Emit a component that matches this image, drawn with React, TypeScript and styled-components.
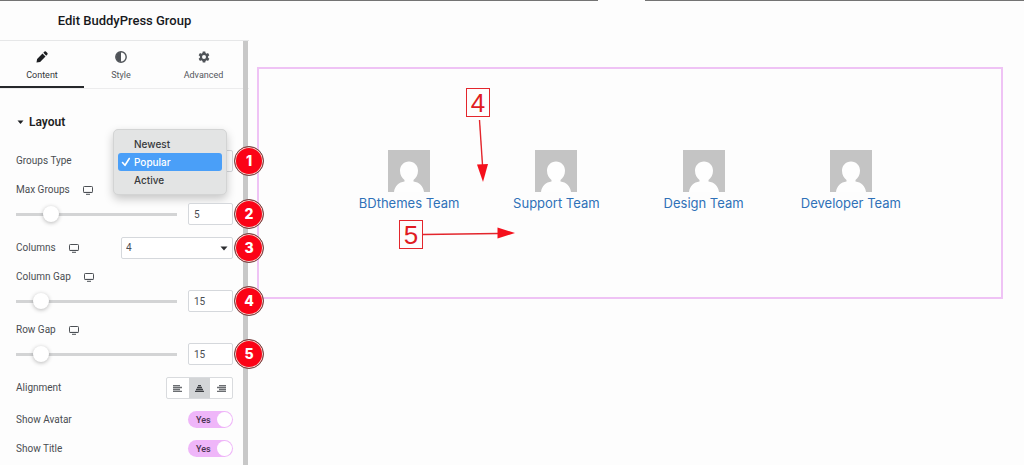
import React, { useState } from 'react';
import styled, { createGlobalStyle } from 'styled-components';

const GlobalStyle = createGlobalStyle`
  *, *::before, *::after { box-sizing: border-box; }
  body {
    margin: 0;
    background: #fdfdfd;
    font-family: Roboto, "Liberation Sans", sans-serif;
    font-size: 10px;
    line-height: 12px;
    color: #4a4d52;
  }
  button, input, select { font: inherit; color: inherit; margin: 0; }
`;

const Page = styled.div`
  min-height: 100vh;
  display: flex;
  flex-direction: column;
`;

const TopLine = styled.div`
  display: grid;
  grid-template-columns: 598fr 47fr 379fr;
  height: 1px;
`;

const LineSegment = styled.span<{ $visible?: boolean }>`
  background: ${p => (p.$visible ? '#747474' : 'transparent')};
`;

const Workspace = styled.div`
  flex: 1;
  display: flex;
`;

const Sidebar = styled.aside`
  position: relative;
  z-index: 1;
  flex: none;
  width: 249px;
`;

const SidebarHeader = styled.header`
  height: 40px;
  display: flex;
  align-items: center;
  justify-content: center;
  border-bottom: 1px solid #e6e7e8;
`;

const Title = styled.h1`
  margin: 0;
  font-size: 13px;
  line-height: 16px;
  font-weight: 500;
  color: #17191c;
`;

const ScrollBar = styled.div`
  position: absolute;
  top: 40px;
  right: 1px;
  bottom: 0;
  width: 5px;
  background: #c8c8c8;
`;

const Tabs = styled.div`
  display: grid;
  grid-template-columns: 84px 74px 1fr;
  height: 48px;
  border-bottom: 1px solid #ececed;
`;

const Tab = styled.button<{ $active?: boolean }>`
  display: flex;
  flex-direction: column;
  align-items: center;
  gap: 6px;
  padding: 10px 0 0;
  border: 0;
  border-bottom: 2px solid ${p => (p.$active ? '#26282b' : 'transparent')};
  background: none;
  font-size: 9px;
  color: ${p => (p.$active ? '#33363a' : '#54575c')};
  svg { color: ${p => (p.$active ? '#1d1f22' : '#4f5358')}; }
`;

const Section = styled.section`
  padding: 25px 16px 0;
`;

const SectionToggle = styled.button`
  display: flex;
  align-items: center;
  gap: 4px;
  padding: 0;
  border: 0;
  background: none;
  font-size: 12px;
  line-height: 16px;
  font-weight: 600;
  color: #1d1f22;
`;

const Controls = styled.div`
  display: flex;
  flex-direction: column;
  gap: 12px;
  padding-top: 20px;
`;

const Row = styled.div`
  position: relative;
  display: flex;
  align-items: center;
  justify-content: space-between;
`;

const Labeled = styled.div`
  display: flex;
  align-items: center;
  gap: 13px;
`;

const SliderGroup = styled.div`
  display: flex;
  flex-direction: column;
  gap: 7px;
`;

const SliderRow = styled(Row)`
  gap: 11px;
`;

const Range = styled.input`
  appearance: none;
  flex: 1;
  min-width: 0;
  height: 16px;
  background: linear-gradient(#d3d4d5, #d3d4d5) center / 100% 3px no-repeat;
  &::-webkit-slider-thumb {
    appearance: none;
    width: 16px;
    height: 16px;
    border-radius: 50%;
    background: #fff;
    box-shadow: 0 1px 4px rgba(0, 0, 0, 0.28);
  }
`;

const NumberBox = styled.input`
  width: 45px;
  height: 22px;
  padding: 0 5px;
  border: 1px solid #d5d8dc;
  border-radius: 2px;
  background: #fff;
`;

const SelectWrap = styled.div`
  position: relative;
  width: 112px;
  height: 22px;
`;

const Select = styled.select`
  appearance: none;
  width: 100%;
  height: 22px;
  padding: 0 4px;
  border: 1px solid #d5d8dc;
  border-radius: 2px;
  background: #fff;
`;

const SelectCaret = styled.svg`
  position: absolute;
  right: 5px;
  top: 9px;
  pointer-events: none;
`;

const Popup = styled.ul`
  position: absolute;
  top: -21px;
  left: -8px;
  width: 114px;
  margin: 0;
  padding: 5px 4px;
  list-style: none;
  border: 1px solid #d3d4d4;
  border-radius: 5px;
  background: #e3e4e4;
  box-shadow: 0 4px 10px rgba(0, 0, 0, 0.22);
`;

const Option = styled.li<{ $selected: boolean }>`
  display: flex;
  align-items: center;
  height: 18px;
  padding-left: 3px;
  border-radius: 3px;
  font-family: Inter, "Liberation Sans", sans-serif;
  font-size: 10px;
  font-weight: 500;
  color: ${p => (p.$selected ? '#fff' : '#37393b')};
  background: ${p => (p.$selected ? '#4a9ff8' : 'transparent')};
`;

const CheckSlot = styled.span`
  display: flex;
  width: 13px;
`;

const Badge = styled.span`
  position: absolute;
  right: -31px;
  top: 50%;
  width: 30px;
  height: 30px;
  margin-top: -15px;
  display: flex;
  align-items: center;
  justify-content: center;
  border: 1px solid #6d4a48;
  border-radius: 50%;
  background: #fb0316;
  box-shadow: inset 0 0 0 1px #f3d6cf;
  color: #fff;
  font-family: Inter, "Liberation Sans", sans-serif;
  font-size: 14px;
  font-weight: 800;
`;

const AlignGroup = styled.div`
  display: grid;
  grid-template-columns: repeat(3, 1fr);
  width: 67px;
  height: 22px;
  border: 1px solid #d9dbde;
  border-radius: 2px;
  background: #fff;
`;

const AlignButton = styled.button<{ $active: boolean }>`
  display: flex;
  align-items: center;
  justify-content: center;
  padding: 0;
  border: 0;
  background: ${p => (p.$active ? '#d3d5d7' : 'transparent')};
  color: ${p => (p.$active ? '#3c3f43' : '#6b6e72')};
`;

const Toggle = styled.label`
  position: relative;
  display: flex;
  align-items: center;
  width: 45px;
  height: 17px;
  padding-left: 8px;
  border-radius: 9px;
  background: #efb6f9;
  color: #4a3350;
  font-size: 9px;
  font-weight: 500;
  &::after {
    content: '';
    position: absolute;
    right: 1px;
    top: 1px;
    width: 15px;
    height: 15px;
    border-radius: 50%;
    background: #fff;
  }
`;

const HiddenCheck = styled.input`
  position: absolute;
  inset: 0;
  opacity: 0;
`;

const Canvas = styled.main`
  flex: 1;
  min-width: 0;
  padding: 66px 21px 0 8px;
`;

const Widget = styled.div`
  position: relative;
  display: flex;
  align-items: center;
  height: 232px;
  padding: 0 84px;
  border: 2px solid #efc3f5;
`;

const GroupGrid = styled.div`
  flex: 1;
  display: grid;
  grid-template-columns: repeat(4, 1fr);
  gap: 15px;
`;

const Group = styled.a`
  display: flex;
  flex-direction: column;
  align-items: center;
  gap: 2px;
  padding-bottom: 4px;
  color: #2f71b8;
  font-family: Inter, "Liberation Sans", sans-serif;
  font-size: 13px;
  line-height: 18px;
  text-decoration: none;
  white-space: nowrap;
`;

const Mark = styled.div<{ $x: number; $y: number }>`
  position: absolute;
  left: ${p => p.$x}px;
  top: ${p => p.$y}px;
  width: 24px;
  height: 29px;
  display: flex;
  align-items: center;
  justify-content: center;
  border: 1px solid #e3262c;
  color: #e01b22;
  font-family: "Liberation Sans", sans-serif;
  font-size: 26px;
  line-height: 26px;
`;

const Arrow = styled.svg<{ $x: number; $y: number }>`
  position: absolute;
  left: ${p => p.$x}px;
  top: ${p => p.$y}px;
`;

const PencilIcon = () => (
  <svg width="12" height="12" viewBox="0 0 12 12" fill="currentColor" aria-hidden="true">
    <path d="M.5 11.5 1.1 7.900 6.500 2.500 9.500 5.500 4.100 10.900zM7.300 1.800 8.500.6q.7-.6 1.400 0L11.400 2.100q.6.700 0 1.400L10.200 4.700z" />
  </svg>
);

const ContrastIcon = () => (
  <svg width="12" height="12" viewBox="0 0 12 12" aria-hidden="true">
    <circle cx="6" cy="6" r="5.2" fill="none" stroke="currentColor" strokeWidth="1.4" />
    <path d="M6 1a5 5 0 0 0 0 10z" fill="currentColor" />
  </svg>
);

const GearIcon = () => (
  <svg width="12" height="12" viewBox="0 0 24 24" fill="currentColor" aria-hidden="true">
    <path
      fillRule="evenodd"
      d="M9.5 1h5l.6 3.2 2 1.1 3-1.1 2.6 4.4-2.5 2.1v2.6l2.5 2.1-2.6 4.4-3-1.1-2 1.1-.6 3.2h-5l-.6-3.2-2-1.1-3 1.1-2.6-4.4 2.5-2.1v-2.6L1.300 8.600l2.600-4.400 3 1.100 2-1.100zM12 8a4 4 0 1 0 0 8 4 4 0 0 0 0-8z"
    />
  </svg>
);

const MonitorIcon = () => (
  <svg width="10" height="9" viewBox="0 0 10 9" fill="none" stroke="#4c5055" aria-hidden="true">
    <rect x="0.5" y="0.5" width="9" height="6" rx="0.8" />
    <path d="M.8 6.400h8.400M3 8.300h4" />
  </svg>
);

const alignments = {
  left: 'M0 .5h7M0 2.500h9M0 4.500h7M0 6.500h9',
  center: 'M3 .5h3M2 2.500h5M1 4.500h7M0 6.500h9',
  right: 'M2 .5h7M0 2.500h9M2 4.500h7M0 6.500h9',
};
type Align = keyof typeof alignments;

const Avatar = () => (
  <svg width="42" height="42" viewBox="0 0 42 42" role="img" aria-label="Group avatar">
    <rect width="42" height="42" fill="#c4c4c4" />
    <path
      fill="#fefefe"
      d="M21 11.500c5.200 0 9 4 9 9.300 0 4-2 7.500-4.500 9.200v1.500c5.600.6 9.800 4.500 10.500 10.500H6c.7-6 4.900-9.900 10.500-10.500V30C14 28.300 12 24.800 12 20.800c0-5.300 3.800-9.300 9-9.300z"
    />
  </svg>
);

interface SliderControlProps {
  id: string;
  label: string;
  initial: number;
  max: number;
  badge: number;
}

function SliderControl({ id, label, initial, max, badge }: SliderControlProps) {
  const [value, setValue] = useState(initial);
  return (
    <SliderGroup>
      <Labeled>
        <label htmlFor={id}>{label}</label>
        <MonitorIcon />
      </Labeled>
      <SliderRow>
        <Range
          type="range"
          aria-label={label}
          min={0}
          max={max}
          value={value}
          onChange={e => setValue(Number(e.target.value))}
        />
        <NumberBox id={id} value={value} onChange={e => setValue(Number(e.target.value) || 0)} />
        <Badge>{badge}</Badge>
      </SliderRow>
    </SliderGroup>
  );
}

function ToggleControl({ label }: { label: string }) {
  return (
    <Row>
      <span>{label}</span>
      <Toggle>
        <HiddenCheck type="checkbox" defaultChecked aria-label={label} />
        Yes
      </Toggle>
    </Row>
  );
}

const groupTypes = ['Newest', 'Popular', 'Active'];
const teams = ['BDthemes Team', 'Support Team', 'Design Team', 'Developer Team'];

export default function App() {
  const [type, setType] = useState('Popular');
  const [align, setAlign] = useState<Align>('center');

  return (
    <Page>
      <GlobalStyle />
      <TopLine>
        <LineSegment $visible />
        <LineSegment />
        <LineSegment $visible />
      </TopLine>
      <Workspace>
        <Sidebar>
          <SidebarHeader>
            <Title>Edit BuddyPress Group</Title>
          </SidebarHeader>
          <Tabs>
            <Tab $active><PencilIcon />Content</Tab>
            <Tab><ContrastIcon />Style</Tab>
            <Tab><GearIcon />Advanced</Tab>
          </Tabs>
          <ScrollBar />
          <Section>
            <SectionToggle>
              <svg width="9" height="5" viewBox="0 0 9 5" aria-hidden="true">
                <path d="M1.500.5h6L4.500 4z" fill="currentColor" />
              </svg>
              Layout
            </SectionToggle>
            <Controls>
              <Row>
                <label htmlFor="type">Groups Type</label>
                <SelectWrap>
                  <Select id="type" value={type} onChange={e => setType(e.target.value)}>
                    {groupTypes.map(t => <option key={t}>{t}</option>)}
                  </Select>
                  <Popup role="listbox" aria-label="Groups Type">
                    {groupTypes.map(t => (
                      <Option
                        key={t}
                        role="option"
                        aria-selected={t === type}
                        $selected={t === type}
                        onClick={() => setType(t)}
                      >
                        <CheckSlot>
                          {t === type && (
                            <svg width="10" height="10" viewBox="0 0 10 10" fill="none" stroke="#fff" strokeWidth="1.600" aria-hidden="true">
                              <path d="M1.500 5.500 4 8.300 8.300 1.500" strokeLinecap="round" strokeLinejoin="round" />
                            </svg>
                          )}
                        </CheckSlot>
                        {t}
                      </Option>
                    ))}
                  </Popup>
                </SelectWrap>
                <Badge>1</Badge>
              </Row>
              <SliderControl id="max-groups" label="Max Groups" initial={5} max={27} badge={2} />
              <Row>
                <Labeled>
                  <label htmlFor="columns">Columns</label>
                  <MonitorIcon />
                </Labeled>
                <SelectWrap>
                  <Select id="columns" defaultValue="4">
                    {[1, 2, 3, 4, 5, 6].map(n => <option key={n}>{n}</option>)}
                  </Select>
                  <SelectCaret width="8" height="5" viewBox="0 0 8 5" aria-hidden="true">
                    <path d="M.5.5h7L4 4.500z" fill="#2c2e31" />
                  </SelectCaret>
                </SelectWrap>
                <Badge>3</Badge>
              </Row>
              <SliderControl id="column-gap" label="Column Gap" initial={15} max={128} badge={4} />
              <SliderControl id="row-gap" label="Row Gap" initial={15} max={128} badge={5} />
              <Row>
                <span>Alignment</span>
                <AlignGroup role="group" aria-label="Alignment">
                  {(Object.keys(alignments) as Align[]).map(a => (
                    <AlignButton key={a} aria-label={a} $active={a === align} onClick={() => setAlign(a)}>
                      <svg width="9" height="7" viewBox="0 0 9 7" stroke="currentColor" strokeWidth="1.300" aria-hidden="true">
                        <path d={alignments[a]} />
                      </svg>
                    </AlignButton>
                  ))}
                </AlignGroup>
              </Row>
              <ToggleControl label="Show Avatar" />
              <ToggleControl label="Show Title" />
            </Controls>
          </Section>
        </Sidebar>
        <Canvas>
          <Widget>
            <GroupGrid>
              {teams.map(team => (
                <Group key={team} href="#">
                  <Avatar />
                  {team}
                </Group>
              ))}
            </GroupGrid>
            <Mark $x={207} $y={19}>4</Mark>
            <Arrow $x={214} $y={50} width="20" height="64" viewBox="0 0 20 64" aria-hidden="true">
              <path d="M6.500 1 9.500 46" stroke="#e3262c" strokeWidth="1.400" />
              <path d="M4 45.500 15 45 10 63z" fill="#f5101c" />
            </Arrow>
            <Mark $x={140} $y={151}>5</Mark>
            <Arrow $x={164} $y={157} width="93" height="14" viewBox="0 0 93 14" aria-hidden="true">
              <path d="M0 8.500 75 7.500" stroke="#e3262c" strokeWidth="1.400" />
              <path d="M74.500 1.500 92 7 74.500 12.500z" fill="#f5101c" />
            </Arrow>
          </Widget>
        </Canvas>
      </Workspace>
    </Page>
  );
}
